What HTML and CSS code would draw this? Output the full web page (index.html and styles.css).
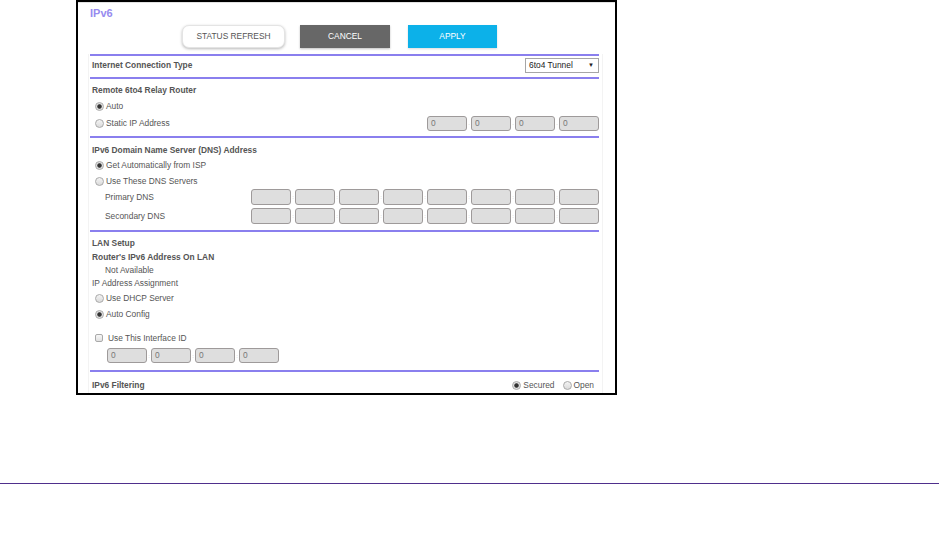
FILE: index.html
```html
<!DOCTYPE html>
<html>
<head>
<meta charset="utf-8">
<link rel="stylesheet" href="styles.css">
</head>
<body>
<div class="frame">
  <div class="title">IPv6</div>
  <div class="buttons">
    <div class="btn btn-refresh">STATUS REFRESH</div>
    <div class="btn btn-cancel">CANCEL</div>
    <div class="btn btn-apply">APPLY</div>
  </div>
  <div class="panel">
    <div class="rule rule-first"></div>

    <div class="row h18">
      <span class="bold">Internet Connection Type</span>
      <div class="select">6to4 Tunnel <span class="arrow">&#9660;</span></div>
    </div>
    <div class="rule rule-m3"></div>

    <div class="section pt3">
      <div class="row h16"><span class="bold">Remote 6to4 Relay Router</span></div>
      <div class="row h16"><span class="radio checked"></span><span class="lbl">Auto</span></div>
      <div class="row h18"><span class="radio"></span><span class="lbl">Static IP Address</span>
        <div class="inputs right">
          <span class="ip">0</span><span class="sep">.</span><span class="ip">0</span><span class="sep">.</span><span class="ip">0</span><span class="sep">.</span><span class="ip">0</span>
        </div>
      </div>
    </div>
    <div class="rule rule-m4"></div>

    <div class="section pt5">
      <div class="row h14"><span class="bold">IPv6 Domain Name Server (DNS) Address</span></div>
      <div class="row h16"><span class="radio checked"></span><span class="lbl">Get Automatically from ISP</span></div>
      <div class="row h16"><span class="radio"></span><span class="lbl">Use These DNS Servers</span></div>
      <div class="row h16"><span class="sub">Primary DNS</span>
        <div class="inputs right">
          <span class="ip"></span><span class="sep">:</span><span class="ip"></span><span class="sep">:</span><span class="ip"></span><span class="sep">:</span><span class="ip"></span><span class="sep">:</span><span class="ip"></span><span class="sep">:</span><span class="ip"></span><span class="sep">:</span><span class="ip"></span><span class="sep">:</span><span class="ip"></span>
        </div>
      </div>
      <div class="row h16 mt3"><span class="sub">Secondary DNS</span>
        <div class="inputs right">
          <span class="ip"></span><span class="sep">:</span><span class="ip"></span><span class="sep">:</span><span class="ip"></span><span class="sep">:</span><span class="ip"></span><span class="sep">:</span><span class="ip"></span><span class="sep">:</span><span class="ip"></span><span class="sep">:</span><span class="ip"></span><span class="sep">:</span><span class="ip"></span>
        </div>
      </div>
    </div>
    <div class="rule rule-m6"></div>

    <div class="section pt4">
      <div class="row h14"><span class="bold">LAN Setup</span></div>
      <div class="row h13"><span class="bold">Router's IPv6 Address On LAN</span></div>
      <div class="row h13"><span class="sub">Not Available</span></div>
      <div class="row h13"><span class="plain">IP Address Assignment</span></div>
      <div class="row h16 mt1"><span class="radio"></span><span class="lbl">Use DHCP Server</span></div>
      <div class="row h16"><span class="radio checked"></span><span class="lbl">Auto Config</span></div>
      <div class="row h14 mt9"><span class="check"></span><span class="lbl lbl-check">Use This Interface ID</span></div>
      <div class="row h15 mt3 ind">
        <div class="inputs">
          <span class="ip">0</span><span class="sep">:</span><span class="ip">0</span><span class="sep">:</span><span class="ip">0</span><span class="sep">:</span><span class="ip">0</span>
        </div>
      </div>
    </div>
    <div class="rule rule-m7"></div>

    <div class="section pt5">
      <div class="row h16"><span class="bold">IPv6 Filtering</span>
        <div class="opts right">
          <span class="radio checked"></span><span class="lbl">Secured</span>
          <span class="radio gap"></span><span class="lbl">Open</span>
        </div>
      </div>
    </div>
  </div>
</div>
<div class="bottom-rule"></div>
</body>
</html>
```

FILE: styles.css
```css
* { box-sizing: border-box; }

html, body {
  margin: 0;
  padding: 0;
  background: #fff;
}

body {
  font-family: "Liberation Sans", Arial, sans-serif;
  font-size: 8.4px;
  color: #555;
}

.frame {
  margin-left: 76px;
  width: 541px;
  height: 395px;
  border: 2px solid #000;
  border-top-width: 2px;
  overflow: hidden;
  box-shadow: inset 0 1px 0 #e2e2e2;
}

.title {
  height: 23px;
  line-height: 23px;
  padding-left: 12px;
  font-size: 11px;
  font-weight: bold;
  color: #978bef;
}

.buttons {
  display: flex;
  height: 23px;
  padding-left: 104px;
}

.btn {
  height: 23px;
  line-height: 23px;
  text-align: center;
  font-size: 8.4px;
}

.btn-refresh {
  width: 103px;
  margin-right: 15px;
  background: #fff;
  color: #555;
  border: 1px solid #e4e4e4;
  border-radius: 7px;
  line-height: 21px;
  box-shadow: 0 1px 3px rgba(0, 0, 0, 0.28);
}

.btn-cancel {
  width: 90px;
  margin-right: 18px;
  background: #676767;
  color: #fff;
  box-shadow: 0 1px 2px rgba(0, 0, 0, 0.25);
}

.btn-apply {
  width: 89px;
  background: #0cb1e9;
  color: #fff;
  box-shadow: 0 1px 2px rgba(0, 0, 0, 0.15);
}

.panel {
  margin-left: 10px;
  width: 515px;
  padding-left: 1px;
  padding-right: 3px;
  border-left: 1px solid #f3f3f3;
  border-right: 1px solid #f3f3f3;
  height: 400px;
}

.rule {
  height: 2px;
  background: #8a7fee;
}

.rule-first { margin-top: 6px; }
.rule-m3 { margin-top: 3px; }
.rule-m4 { margin-top: 4px; }
.rule-m6 { margin-top: 6px; }
.rule-m7 { margin-top: 7px; }

.pt3 { padding-top: 3px; }
.pt4 { padding-top: 4px; }
.pt5 { padding-top: 5px; }
.mt1 { margin-top: 1px; }
.mt3 { margin-top: 3px; }
.mt9 { margin-top: 9px; }

.row {
  display: flex;
  align-items: center;
  white-space: nowrap;
}

.h13 { height: 13px; }
.h14 { height: 14px; }
.h15 { height: 15px; }
.h16 { height: 16px; }
.h18 { height: 18px; }

.bold {
  font-weight: bold;
  color: #555;
  padding-left: 2px;
}

.plain { padding-left: 2px; }

.sub { padding-left: 15px; }

.ind { padding-left: 17px; }

.right { margin-left: auto; }

.radio {
  width: 9px;
  height: 9px;
  margin-left: 5px;
  border-radius: 50%;
  border: 1px solid #a9a9a9;
  background: linear-gradient(#f4f4f4, #dadada);
  flex: none;
}

.radio.checked {
  background: radial-gradient(circle, #333 0, #333 1.8px, #d9d9d9 2.6px, #eee 4px);
}

.lbl { margin-left: 2px; }

.check {
  width: 8px;
  height: 8px;
  margin-left: 5px;
  border: 1px solid #a9a9a9;
  border-radius: 2px;
  background: linear-gradient(#f7f7f7, #e1e1e1);
  flex: none;
}

.lbl-check { margin-left: 5px; }

.inputs {
  display: flex;
  align-items: center;
}

.ip {
  width: 40px;
  height: 16px;
  line-height: 14px;
  padding-left: 3px;
  background: #dedede;
  border: 1px solid #9e9a9a;
  border-radius: 3px;
  color: #777;
  font-size: 8.4px;
}

.h15 .ip, .h18 .ip { height: 15px; line-height: 13px; }

.sep {
  width: 4px;
  font-size: 6px;
  color: #bbb;
  text-align: center;
  line-height: 6px;
}

.select {
  margin-left: auto;
  width: 74px;
  height: 15px;
  line-height: 13px;
  border: 1px solid #a6a6a6;
  padding-left: 3px;
  color: #222;
  position: relative;
  background: #fff;
}

.arrow {
  position: absolute;
  right: 4px;
  top: 0;
  font-size: 6px;
  color: #222;
}

.opts {
  display: flex;
  align-items: center;
  margin-right: 5px;
}

.radio.gap { margin-left: 8px; }

.bottom-rule {
  margin-top: 88px;
  height: 1px;
  background: #4f2f8c;
}
```
